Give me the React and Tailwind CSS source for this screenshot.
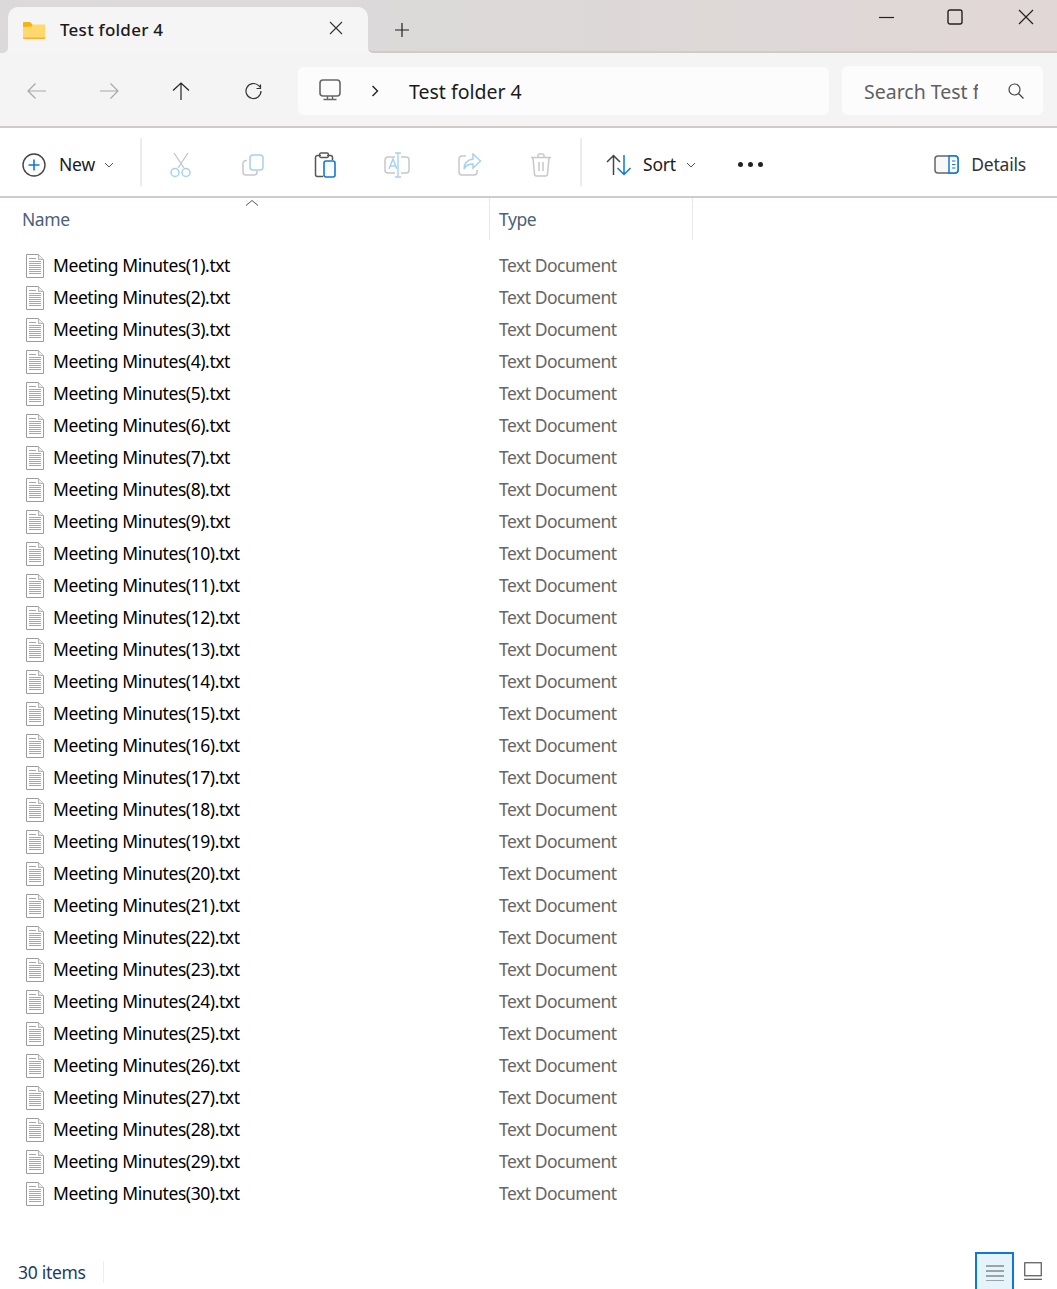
import React from "react";

const files = Array.from({ length: 30 }, (_, i) => `Meeting Minutes(${i + 1}).txt`);

const Icon = ({ className = "", w = 24, h = 24, children }) => (
  <svg width={w} height={h} viewBox={`0 0 ${w} ${h}`} fill="none" className={`shrink-0 ${className}`}>
    {children}
  </svg>
);

const FolderIcon = () => (
  <Icon w={24} h={18}>
    <path d="M1 2C1 1.400 1.500 1 2 1h6l2.600 2.500V6H1z" fill="#f5b30f" />
    <path d="M1 6l9-.5.500-2h12c.4 0 .7.300.7.700v12.600c0 .4-.3.7-.7.7H1.800c-.4 0-.8-.3-.8-.7z" fill="#ffd96e" />
    <path d="M1 16.400h22.200v.9c0 .4-.3.7-.7.7H1.800c-.4 0-.8-.3-.8-.7z" fill="#f2b233" />
  </Icon>
);

const FileIcon = () => (
  <Icon w={18} h={25}>
    <path d="M.5 .5h12l5 5v18H.5z" fill="#fff" stroke="#9c9c9c" />
    <path d="M12.500 .5v5h5" fill="#ececec" stroke="#b5b5b5" />
    <path d="M3 4.500h7M3 7.500h12M3 9.500h12M3 11.500h12M3 13.500h12M3 15.500h12M3 17.500h12M3 19.500h12" stroke="#a8a8a8" />
  </Icon>
);

const Divider = ({ className = "" }) => <div className={`w-[2px] h-[48px] bg-[#ececec] ${className}`} />;

const Chevron = () => (
  <Icon w={10} h={6} className="text-[#555]">
    <path d="M1 1l4 4 4-4" stroke="currentColor" />
  </Icon>
);

const App = () => {
  return (
    <div className="w-full h-[1289px] overflow-hidden bg-white flex flex-col font-['Noto_Sans',sans-serif] text-[#1a1a1a]">
      {/* tab strip */}
      <div className="h-[53px] shrink-0 flex bg-[#f5f5f5]">
        <div className="w-2 bg-[#dbd9d9] rounded-br-[5px]" />
        <div className="w-[360px] bg-[#dbd9d9] pt-[7px] flex">
          <div className="flex-1 rounded-t-[10px] bg-[#f5f5f5] flex items-center pl-[14px]">
            <FolderIcon />
            <span className="ml-[14px] text-[17px] font-medium tracking-[0.25px]">Test folder 4</span>
            <Icon w={16} h={16} className="ml-auto mr-[24px] -mt-[5px]">
              <path d="M2 2l12 12M14 2L2 14" stroke="#333" strokeWidth="1.100" />
            </Icon>
          </div>
        </div>
        <div className="flex-1 bg-gradient-to-r from-[#dbd9d9] to-[#e1d7d6] rounded-bl-[5px] border-b-2 border-[#d0cac9] flex">
          <Icon w={16} h={16} className="ml-[26px] mt-[22px]">
            <path d="M8 1v14M1 8h14" stroke="#222" strokeWidth="1.200" />
          </Icon>
          <div className="ml-auto flex h-[33px] items-center pr-[23px]">
            <Icon w={16} h={16}>
              <path d="M1 8.500h15" stroke="#222" strokeWidth="1.200" />
            </Icon>
            <Icon w={16} h={16} className="ml-[53px]">
              <rect x="1" y="1" width="14" height="14" rx="2" stroke="#222" strokeWidth="1.400" />
            </Icon>
            <Icon w={16} h={16} className="ml-[55px]">
              <path d="M1 1l14 14M15 1L1 15" stroke="#222" strokeWidth="1.200" />
            </Icon>
          </div>
        </div>
      </div>

      {/* address row */}
      <div className="h-[75px] shrink-0 bg-[#f5f4f4] border-b-2 border-[#d0cac9] pt-[3px] flex items-center">
        <div className="w-[298px] flex items-center shrink-0 pl-[26px]">
          <Icon w={22} h={20} className="text-[#a8a8a8]">
            <path d="M20 10H2M9.500 2.500L2 10l7.500 7.500" stroke="currentColor" strokeWidth="1.200" />
          </Icon>
          <Icon w={22} h={20} className="ml-[50px] text-[#a8a8a8]">
            <path d="M2 10h18M12.500 2.500L20 10l-7.500 7.500" stroke="currentColor" strokeWidth="1.200" />
          </Icon>
          <Icon w={20} h={20} className="ml-[51px] text-[#222]">
            <path d="M10 19V2M2 9.500L10 2l8 7.500" stroke="currentColor" strokeWidth="1.200" />
          </Icon>
          <Icon w={20} h={20} className="ml-[53px] text-[#333]">
            <path d="M16.500 3.500v4h-4M17 10a7.500 7.500 0 1 1-2.300-5.400L16.500 6.500" stroke="currentColor" strokeWidth="1.200" />
          </Icon>
        </div>
        <div className="w-[531px] h-[48px] shrink-0 rounded-[6px] bg-[#fcfcfc] flex items-center pl-[21px]">
          <Icon w={22} h={22} className="text-[#666] -mt-[2px]">
            <rect x="1" y="1" width="20" height="16" rx="3" stroke="currentColor" strokeWidth="1.600" />
            <path d="M8.500 17v3M13.500 17v3M4.500 20.500h13" stroke="currentColor" strokeWidth="1.400" />
          </Icon>
          <Icon w={8} h={12} className="ml-[30px] text-[#222]">
            <path d="M1.500 1l5 5-5 5" stroke="currentColor" strokeWidth="1.400" />
          </Icon>
          <span className="ml-[30px] mt-[2px] text-[19.500px] leading-none">Test folder 4</span>
        </div>
        <div className="w-[201px] h-[49px] ml-[13px] -mt-[1px] shrink-0 rounded-[6px] bg-[#fdfcfc] flex items-center pl-[22px]">
          <span className="w-[114px] mt-[2px] overflow-hidden whitespace-nowrap text-[19.500px] leading-none text-[#5f5f5f]">Search Test folder 4</span>
          <Icon w={18} h={18} className="ml-[29px] text-[#444]">
            <circle cx="7.500" cy="7.500" r="5.500" stroke="currentColor" strokeWidth="1.200" />
            <path d="M11.500 11.500l5 5" stroke="currentColor" strokeWidth="1.200" />
          </Icon>
        </div>
      </div>

      {/* command bar */}
      <div className="h-[70px] shrink-0 border-b-2 border-[#d0cac9] pt-[5px] flex items-center pl-[22px] pr-[31px]">
        <Icon w={24} h={24}>
          <circle cx="12" cy="12" r="11" stroke="#444" strokeWidth="1.400" />
          <path d="M12 6.500v11M6.500 12h11" stroke="#0f78d4" strokeWidth="1.600" />
        </Icon>
        <span className="ml-[13px] text-[17.500px] tracking-[-0.2px]">New</span>
        <span className="ml-[9px]"><Chevron /></span>
        <Divider className="ml-[26px] -mt-[5px]" />
        <Icon w={22} h={26} className="ml-[28px]">
          <path d="M4 1l10 15M18 1L8 16" stroke="#c4c4c4" strokeWidth="1.300" />
          <circle cx="5" cy="20.500" r="4" stroke="#a6d0f2" strokeWidth="1.500" />
          <circle cx="16" cy="20.500" r="4" stroke="#a6d0f2" strokeWidth="1.500" />
        </Icon>
        <Icon w={22} h={22} className="ml-[50px]">
          <path d="M5 6.500H4a3 3 0 0 0-3 3V18a3 3 0 0 0 3 3h8a3 3 0 0 0 3-3v-1" stroke="#c8c8c8" strokeWidth="1.500" />
          <rect x="8" y="1" width="13" height="15" rx="3" stroke="#a6d0f2" strokeWidth="1.500" fill="#fff" />
        </Icon>
        <Icon w={22} h={26} className="ml-[50px]">
          <path d="M7 3.500H3.500a2 2 0 0 0-2 2v17a2 2 0 0 0 2 2H9" stroke="#555" strokeWidth="1.500" />
          <path d="M13 3.500h3.500a2 2 0 0 1 2 2V8" stroke="#555" strokeWidth="1.500" />
          <rect x="5.500" y="1" width="9" height="4.500" rx="1.500" stroke="#555" strokeWidth="1.300" />
          <rect x="10" y="9" width="11" height="16" rx="2" stroke="#0f78d4" strokeWidth="1.600" fill="#f8fbff" />
        </Icon>
        <Icon w={26} h={26} className="ml-[48px]">
          <path d="M11 5H4a3 3 0 0 0-3 3v10a3 3 0 0 0 3 3h7M17 5h5a3 3 0 0 1 3 3v10a3 3 0 0 1-3 3h-5" stroke="#c8c8c8" strokeWidth="1.500" />
          <path d="M11 1h6M14 1v24M11 25h6" stroke="#a6d0f2" strokeWidth="1.400" />
          <path d="M5 17l4-10 4 10M6.500 14h5" stroke="#a6d0f2" strokeWidth="1.400" />
        </Icon>
        <Icon w={24} h={24} className="ml-[48px]">
          <path d="M8 3H4a3 3 0 0 0-3 3v13a3 3 0 0 0 3 3h12a3 3 0 0 0 3-3v-2" stroke="#c8c8c8" strokeWidth="1.500" />
          <path d="M15 1l7.500 7-7.500 7v-4c-4 0-7 1-9 5 0-6 3-9 9-10z" stroke="#a6d0f2" strokeWidth="1.500" fill="#fff" />
        </Icon>
        <Icon w={22} h={24} className="ml-[48px]">
          <path d="M1 4.500h20M8 4V2.500A1.500 1.500 0 0 1 9.500 1h3A1.500 1.500 0 0 1 14 2.500V4" stroke="#c8c8c8" strokeWidth="1.500" />
          <path d="M3 5l1.500 16a2 2 0 0 0 2 2h9a2 2 0 0 0 2-2L19 5" stroke="#c8c8c8" strokeWidth="1.500" />
          <path d="M9 9v9M13 9v9" stroke="#c8c8c8" strokeWidth="1.500" />
        </Icon>
        <Divider className="ml-[28px] -mt-[5px]" />
        <Icon w={26} h={22} className="ml-[24px]">
          <path d="M7.500 21V1.500M1 8l6.500-6.500L14 8" stroke="#444" strokeWidth="1.500" />
          <path d="M18 1v19.500M11.500 14l6.500 6.500 6.500-6.500" stroke="#0f78d4" strokeWidth="1.500" />
        </Icon>
        <span className="ml-[11px] text-[17.500px] tracking-[-0.2px]">Sort</span>
        <span className="ml-[10px]"><Chevron /></span>
        <div className="ml-[42px] flex gap-[5px]">
          <span className="size-[5px] rounded-full bg-[#222]" />
          <span className="size-[5px] rounded-full bg-[#222]" />
          <span className="size-[5px] rounded-full bg-[#222]" />
        </div>
        <Icon w={25} h={19} className="ml-auto">
          <rect x="1" y="1" width="23" height="17" rx="3" fill="#f8f8f8" stroke="#666" strokeWidth="1.500" />
          <path d="M15 1h6a3 3 0 0 1 3 3v11a3 3 0 0 1-3 3h-6z" fill="#fff" stroke="#0f78d4" strokeWidth="1.500" />
          <path d="M18 6h3.500M18 9.500h3.500M18 13h3.500" stroke="#0f78d4" strokeWidth="1.200" />
        </Icon>
        <span className="ml-[12px] text-[17.500px] tracking-[-0.2px] text-[#333]">Details</span>
      </div>

      {/* column headers */}
      <div className="relative h-[42px] shrink-0 flex text-[17.500px] tracking-[-0.45px] text-[#4c607a]">
        <Icon w={14} h={8} className="absolute left-[245px] top-[1px]">
          <path d="M1 6.500l6-5 6 5" stroke="#555" />
        </Icon>
        <div className="w-[490px] pl-[22px] pt-[8px] border-r border-[#e8e8e8]">Name</div>
        <div className="w-[203px] pl-[9px] pt-[8px] border-r border-[#e8e8e8]">Type</div>
      </div>

      {/* file rows */}
      <div className="mt-[10px] flex flex-col">
        {files.map((name) => (
          <div key={name} className="h-[32px] flex items-center text-[17.500px]">
            <div className="w-[490px] flex items-center pl-[26px]">
              <FileIcon />
              <span className="ml-[9px] -mt-[2px] tracking-[-0.42px] text-black whitespace-nowrap">{name}</span>
            </div>
            <span className="pl-[9px] -mt-[2px] tracking-[-0.5px] text-[#666]">Text Document</span>
          </div>
        ))}
      </div>

      {/* status bar */}
      <div className="mt-auto h-[37px] flex items-start">
        <div className="h-[22px] mt-[9px] pl-[18px] w-[104px] border-r border-[#eeeeee] flex items-center text-[17.500px] tracking-[-0.3px] text-[#1f3a5f]">30 items</div>
        <div className="ml-auto mr-[10px] w-[39px] h-[37px] bg-[#e5f3fb] border-2 border-b-0 border-[#0f78d4] flex items-start justify-center pt-[11px]">
          <Icon w={20} h={16}>
            <path d="M1 1h18M1 6h18M1 11h18M1 16h18" stroke="#555" />
          </Icon>
        </div>
        <Icon w={18} h={18} className="mr-[15px] mt-[10px]">
          <rect x=".750" y=".750" width="16.500" height="13" stroke="#555" strokeWidth="1.200" />
          <path d="M0 17.300h18" stroke="#555" strokeWidth="1.200" />
        </Icon>
      </div>
    </div>
  );
};

export default App;
